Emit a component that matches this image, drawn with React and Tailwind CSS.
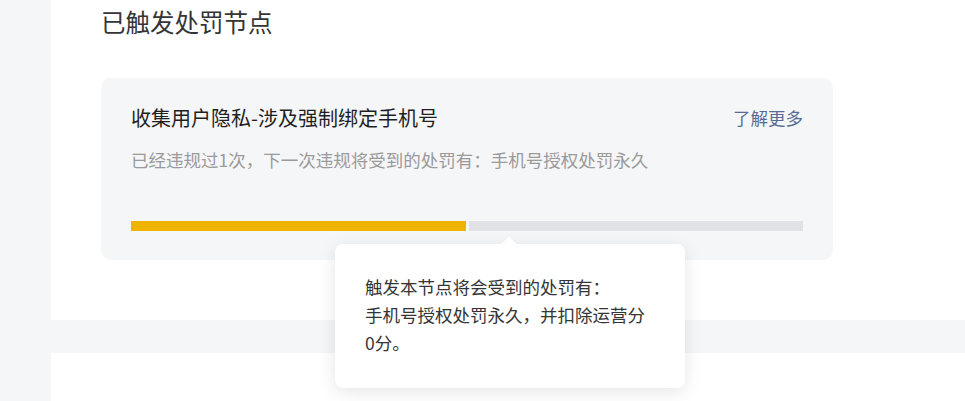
import React from 'react';

const font = { fontFamily: '"Noto Sans CJK SC", "Noto Sans", sans-serif' };

const PenaltyTooltip = () => (
  <div className="absolute left-[234px] top-[166px] w-[350px] rounded-lg bg-white px-[30px] pt-[29px] pb-[31px] shadow-[0_4px_18px_rgba(0,0,0,0.1)]">
    {/* 小箭头 */}
    <div className="absolute -top-[5px] left-[168px] h-[12px] w-[12px] rotate-45 bg-white" />
    <p className="relative text-[17.5px] leading-[28px] text-[#353535]">
      触发本节点将会受到的处罚有：
      <br />
      手机号授权处罚永久，并扣除运营分
      <br />
      0分。
    </p>
  </div>
);

const PenaltyCard = () => (
  <div className="relative mt-[39px] w-[732px] rounded-[10px] bg-[#f5f6f8] px-[30px] pt-[26px] pb-[29px]">
    <div className="flex items-center justify-between">
      <h4 className="text-[20px] leading-[28px] text-[#1f1f1f]">收集用户隐私-涉及强制绑定手机号</h4>
      <a href="#" className="text-[17.5px] leading-[28px] text-[#576b95]">了解更多</a>
    </div>
    <p className="mt-[14px] text-[17.5px] leading-[28px] text-[#9a9a9a]">
      已经违规过1次，下一次违规将受到的处罚有：手机号授权处罚永久
    </p>
    {/* 进度条 */}
    <div className="mt-[47px] flex gap-[3px]">
      <div className="h-[10px] flex-1 bg-[#efb400]" />
      <div className="h-[10px] flex-1 bg-[#e1e2e5]" />
    </div>
    <PenaltyTooltip />
  </div>
);

export default function App() {
  return (
    <div className="flex h-[401px] flex-col gap-[33px] overflow-hidden bg-[#f5f6f8] pl-[51px]" style={font}>
      <div className="h-[320px] shrink-0 bg-white pl-[50px] pt-[5px]">
        <h3 className="text-[24.5px] leading-[34px] text-[#353535]">已触发处罚节点</h3>
        <PenaltyCard />
      </div>
      <div className="flex-1 bg-white" />
    </div>
  );
}
